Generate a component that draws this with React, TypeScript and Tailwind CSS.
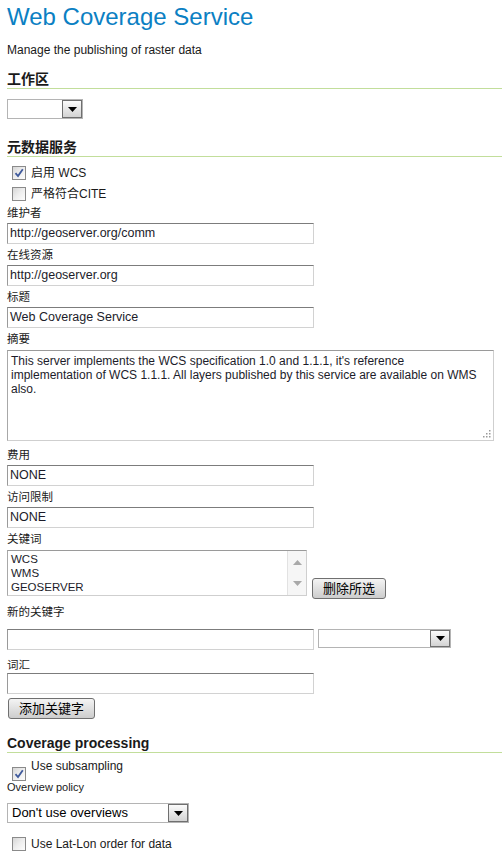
import React from "react";

function Heading({ children, className }: { children: React.ReactNode; className: string }) {
    return (
        <h2 className={"text-[14px] font-bold leading-[18px] border-b border-[#c2de9b] text-[#1a1a1a] " + className}>
            {children}
        </h2>
    );
}

function Checkbox({ checked }: { checked?: boolean }) {
    return (
        <span className="relative inline-block w-[14px] h-[14px] shrink-0 border border-[#8a8a8a] bg-gradient-to-br from-[#d6d6d6] via-[#eeeeee] to-[#fdfdfd]">
            {checked && (
                <svg className="absolute left-[1px] top-[1px]" width="10" height="10" viewBox="0 0 10 10">
                    <path d="M1.5 5.2 L4 8 L8.8 1.2" fill="none" stroke="#3f5a9c" strokeWidth="1.8" />
                </svg>
            )}
        </span>
    );
}

function Arrow() {
    return (
        <span className="flex items-center justify-center w-[20px] h-full border border-[#6f6f6f] bg-gradient-to-b from-[#fbfbfb] to-[#d3d3d3]">
            <svg width="9" height="5" viewBox="0 0 9 5">
                <path d="M0 0 H9 L4.5 5 Z" fill="#000" />
            </svg>
        </span>
    );
}

function Select({ w, h, text }: { w: string; h: string; text?: string }) {
    return (
        <div className={"flex items-stretch border border-[#b4b4b4] bg-white " + w + " " + h}>
            <span className="flex-1 pl-[4px] text-[13px] leading-[17px] text-black truncate">{text}</span>
            <Arrow />
        </div>
    );
}

function TextInput({ value }: { value?: string }) {
    return (
        <div className="w-[307px] h-[21px] border border-t-[#7c7c7c] border-l-[#9a9a9a] border-r-[#d2d2d2] border-b-[#d2d2d2] bg-white pl-[2px] text-[12.5px] leading-[19px] text-[#1c1c2a]">
            {value}
        </div>
    );
}

function Field({ label, value, first }: { label: string; value?: string; first?: boolean }) {
    return (
        <div>
            <div className={(first ? "mt-[1px] " : "mt-[3px] ") + "text-[11.5px] leading-[16px]"}>{label}</div>
            <div className="mt-[2px]">
                <TextInput value={value} />
            </div>
        </div>
    );
}

function Button({ children, className }: { children: React.ReactNode; className: string }) {
    return (
        <button className={"h-[21px] border border-[#707070] rounded-[3px] bg-gradient-to-b from-[#f4f4f4] to-[#cdcdcd] text-[13px] leading-[19px] text-black " + className}>
            {children}
        </button>
    );
}

export default function App() {

    return (

        <div className="min-h-screen bg-white pl-[7px] pt-[1px] text-[#1a1a1a] font-['Liberation_Sans','Noto_Sans_CJK_SC',sans-serif]">

            <h1 className="text-[24px] leading-[32px] text-[#0b80c3]">
                Web Coverage Service
            </h1>

            <p className="mt-[9px] text-[12px] leading-[16px]">
                Manage the publishing of raster data
            </p>

            <Heading className="mt-[12px]">工作区</Heading>

            <div className="mt-[10px]">
                <Select w="w-[76px]" h="h-[20px]" />
            </div>

            <Heading className="mt-[19px]">元数据服务</Heading>

            <div className="mt-[5px] flex items-center h-[21px] pl-[5px]">
                <Checkbox checked />
                <span className="ml-[5px] text-[12px]">启用 WCS</span>
            </div>
            <div className="flex items-center h-[21px] pl-[5px]">
                <Checkbox />
                <span className="ml-[5px] text-[12px]">严格符合CITE</span>
            </div>

            <Field first label="维护者" value="http://geoserver.org/comm" />
            <Field label="在线资源" value="http://geoserver.org" />
            <Field label="标题" value="Web Coverage Service" />

            <div className="mt-[3px] text-[11.5px] leading-[16px]">摘要</div>
            <div className="relative mt-[3px] w-[487px] h-[91px] border border-t-[#9a9a9a] border-l-[#a8a8a8] border-r-[#cfcfcf] border-b-[#cfcfcf] bg-white pl-[3px] pr-[10px] pt-[3px] text-[12px] leading-[14px] text-[#1c1c2a]">
                This server implements the WCS specification 1.0 and 1.1.1, it's reference implementation of WCS 1.1.1. All layers published by this service are available on WMS also.
                <svg className="absolute right-[2px] bottom-[2px]" width="9" height="9" viewBox="0 0 9 9">
                    <rect x="7" y="1" width="1.5" height="1.5" fill="#9a9a9a" />
                    <rect x="4" y="4" width="1.5" height="1.5" fill="#9a9a9a" />
                    <rect x="7" y="4" width="1.5" height="1.5" fill="#9a9a9a" />
                    <rect x="1" y="7" width="1.5" height="1.5" fill="#9a9a9a" />
                    <rect x="4" y="7" width="1.5" height="1.5" fill="#9a9a9a" />
                    <rect x="7" y="7" width="1.5" height="1.5" fill="#9a9a9a" />
                </svg>
            </div>

            <div className="mt-[6px] text-[11.5px] leading-[16px]">费用</div>
            <div className="mt-[2px]"><TextInput value="NONE" /></div>
            <Field label="访问限制" value="NONE" />

            <div className="mt-[3px] text-[11.5px] leading-[16px]">关键词</div>
            <div className="mt-[3px] flex items-start">
                <div className="flex w-[300px] h-[46px] border border-t-[#9a9a9a] border-l-[#a8a8a8] border-r-[#cfcfcf] border-b-[#cfcfcf] bg-white">
                    <div className="flex-1 pl-[3px] pt-[1px] text-[11.5px] leading-[14px] text-[#1c1c2a]">
                        <div>WCS</div>
                        <div>WMS</div>
                        <div>GEOSERVER</div>
                    </div>
                    <div className="w-[19px] border-l border-[#e2e2e2] bg-[#f6f6f6] flex flex-col items-center justify-between py-[9px]">
                        <svg width="9" height="5" viewBox="0 0 9 5"><path d="M0 5 H9 L4.5 0 Z" fill="#a9a9a9" /></svg>
                        <svg width="9" height="5" viewBox="0 0 9 5"><path d="M0 0 H9 L4.5 5 Z" fill="#a9a9a9" /></svg>
                    </div>
                </div>
                <Button className="ml-[5px] mt-[28px] w-[74px]">删除所选</Button>
            </div>

            <div className="mt-[5px] text-[11.5px] leading-[16px]">新的关键字</div>
            <div className="mt-[9px] flex items-start">
                <TextInput />
                <div className="ml-[4px]">
                    <Select w="w-[133px]" h="h-[19px]" />
                </div>
            </div>

            <div className="mt-[7px] text-[11.5px] leading-[16px]">词汇</div>
            <TextInput />

            <Button className="mt-[4px] ml-[1px] w-[87px] block">添加关键字</Button>

            <Heading className="mt-[15px] text-[14px]">Coverage processing</Heading>

            <div className="mt-[6px] flex items-start pl-[5px]">
                <span className="flex mt-[8px]"><Checkbox checked /></span>
                <span className="ml-[5px] text-[12px] leading-[14px]">Use subsampling</span>
            </div>
            <div className="text-[11px] leading-[13px]">Overview policy</div>

            <div className="mt-[9px]">
                <Select w="w-[182px]" h="h-[20px]" text="Don't use overviews" />
            </div>

            <div className="mt-[10px] flex items-center h-[21px] pl-[5px]">
                <Checkbox />
                <span className="ml-[5px] text-[12px]">Use Lat-Lon order for data</span>
            </div>

        </div>

    );
}
